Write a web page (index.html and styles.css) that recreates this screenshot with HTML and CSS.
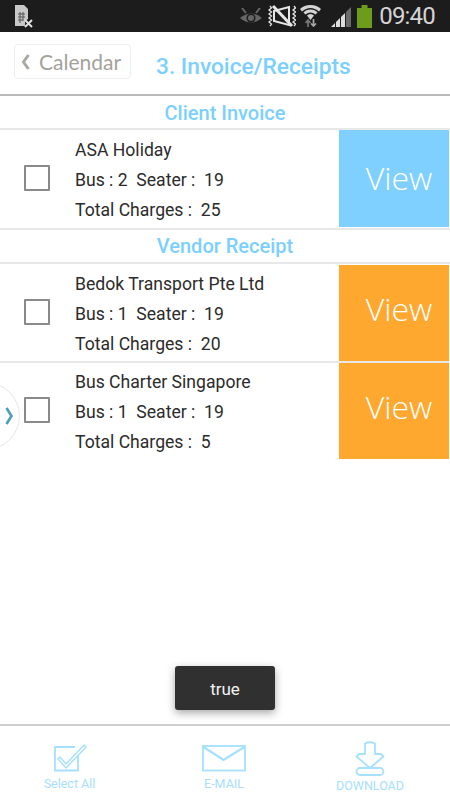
FILE: index.html
```html
<!DOCTYPE html>
<html>
<head>
<meta charset="utf-8">
<title>Invoice/Receipts</title>
<link rel="stylesheet" href="styles.css">
</head>
<body>
<div class="page">
  <div class="status">
    <svg width="19" height="23" viewBox="0 0 19 23"><path d="M0 0H9L13 4V14L10 16V21H0Z" fill="#c8c8c8"/><path d="M3 9H10M3 12H10M3 15H8M5 7V18M8 7V16" stroke="#555" stroke-width="1" fill="none"/><path d="M10 15L17 22M17 15L10 22" stroke="#e0e0e0" stroke-width="2"/></svg>
    <div class="status-right">
      <svg class="i-eye" width="22" height="17" viewBox="0 0 22 17"><path d="M0 10Q11 1 22 10Q11 19 0 10Z" fill="#666"/><circle cx="11" cy="10" r="4.500" fill="#1c1c1c"/><circle cx="11" cy="10" r="3" fill="#666"/><path d="M2 0L6 5M20 0L16 5" stroke="#666" stroke-width="2"/></svg>
      <svg class="i-mute" width="28" height="22" viewBox="0 0 28 22"><path d="M2 1L3.500 3L1 5L3.500 7L1 9L3.500 11L1 13L3.500 15L1 17L3.500 19L2 21M26 1L27.500 3L25 5L27.500 7L25 9L27.500 11L25 13L27.500 15L25 17L27.500 19L26 21" stroke="#e6e6e6" stroke-width="1.300" fill="none"/><path d="M6 6L21 2V20L6 16Z" fill="#1c1c1c" stroke="#e6e6e6" stroke-width="2"/><path d="M5 1L24 21" stroke="#e6e6e6" stroke-width="3"/></svg>
      <svg class="i-wifi" width="21" height="22" viewBox="0 0 21 22"><path d="M10.500 0Q4 0 0 4L2 6.500Q6 3 10.500 3Q15 3 19 6.500L21 4Q17 0 10.500 0ZM10.500 4.500Q6 4.500 3.500 7.500L5.500 9.500Q8 7.500 10.500 7.500Q13 7.500 15.500 9.500L17.500 7.500Q15 4.500 10.500 4.500ZM10.500 9Q8.500 9 7 10.500L10.500 15L14 10.500Q12.500 9 10.500 9Z" fill="#d4d4d4"/><path d="M8 15V22M5.500 18L8 15L10.500 18" stroke="#777" stroke-width="1.700" fill="none"/><path d="M13.500 14V21M11 18.500L13.500 21L16 18.500" stroke="#a8a8a8" stroke-width="1.700" fill="none"/></svg>
      <svg class="i-signal" width="20" height="20" viewBox="0 0 20 20"><path d="M0 20L4 16V20ZM5 15L9 11V20H5ZM10 10L14 6V20H10Z" fill="#dcdcdc"/><path d="M15 5L20 0V20H15Z" fill="#6a6a6a"/></svg>
      <svg class="i-batt" width="15" height="23" viewBox="0 0 15 23"><path d="M4.500 0H10.500V3H15V23H0V3H4.500Z" fill="#6c9c1a"/></svg>
      <span class="clock">09:40</span>
    </div>
  </div>

  <header class="topbar">
    <div class="back"><svg class="chev" width="9" height="16" viewBox="0 0 9 16"><path d="M7.500 1L2.500 8L7.500 15" fill="none" stroke="#a9a9a3" stroke-width="3"/></svg>Calendar</div>
    <h1 class="title">3. Invoice/Receipts</h1>
  </header>

  <main class="content">
    <h2 class="section first">Client Invoice</h2>
    <section class="row r1">
      <div class="check-cell"><span class="check"></span></div>
      <div class="info">
        <div>ASA Holiday</div>
        <div>Bus : 2&nbsp; Seater :&nbsp; 19</div>
        <div>Total Charges :&nbsp; 25</div>
      </div>
      <div class="view blue">View</div>
    </section>
    <h2 class="section">Vendor Receipt</h2>
    <section class="row r2">
      <div class="check-cell"><span class="check"></span></div>
      <div class="info">
        <div>Bedok Transport Pte Ltd</div>
        <div>Bus : 1&nbsp; Seater :&nbsp; 19</div>
        <div>Total Charges :&nbsp; 20</div>
      </div>
      <div class="view orange">View</div>
    </section>
    <section class="row r3">
      <div class="check-cell"><span class="check"></span></div>
      <div class="info">
        <div>Bus Charter Singapore</div>
        <div>Bus : 1&nbsp; Seater :&nbsp; 19</div>
        <div>Total Charges :&nbsp; 5</div>
      </div>
      <div class="view orange">View</div>
    </section>
  </main>

  <nav class="bottom">
    <div class="tool tool-a">
      <svg width="34" height="30" viewBox="0 0 34 30"><path d="M25 11V27.500H2V4H22" fill="none" stroke="#a6e0ff" stroke-width="1.800"/><path d="M7 14L13 21L31 2L33 4L13 25L5 16Z" fill="#fff" stroke="#a6e0ff" stroke-width="1.400" stroke-linejoin="round"/></svg>
      <span>Select All</span>
    </div>
    <div class="tool tool-b">
      <svg width="44" height="27" viewBox="0 0 44 27"><rect x="1" y="1" width="42" height="24.500" fill="none" stroke="#a6e0ff" stroke-width="1.800"/><path d="M1.500 2L21.500 15L42.500 2" fill="none" stroke="#a6e0ff" stroke-width="2.200"/></svg>
      <span>E-MAIL</span>
    </div>
    <div class="tool tool-c">
      <svg width="30" height="35" viewBox="0 0 30 35"><path d="M10 1.500Q15 -1 20 1.500V12H26L28.500 14.500L15 26L1.500 14.500L4 12H10Z" transform="translate(0 1)" fill="none" stroke="#a6e0ff" stroke-width="1.800" stroke-linejoin="round"/><rect x="1.500" y="27" width="27" height="7" rx="3.500" fill="none" stroke="#a6e0ff" stroke-width="1.800"/></svg>
      <span>DOWNLOAD</span>
    </div>
  </nav>

  <div class="side-tab"><svg width="8" height="18" viewBox="0 0 8 18"><path d="M1.500 1L6.500 9L1.500 17" fill="none" stroke="#4a9dbd" stroke-width="2.600"/></svg></div>
  <div class="toast">true</div>
</div>
</body>
</html>
```

FILE: styles.css
```css
* { box-sizing: border-box; }
html, body { margin: 0; padding: 0; }
body { width: 450px; height: 800px; overflow: hidden; background: #fff; font-family: Roboto, "Liberation Sans", sans-serif; }
.page { position: relative; width: 450px; height: 800px; display: flex; flex-direction: column; }

.status { height: 32px; background: #1c1c1c; display: flex; align-items: center; justify-content: space-between; padding: 0 15px 0 15px; flex: none; }
.status-right { display: flex; align-items: center; }
.i-eye { margin-top: 1px; }
.i-mute { margin-left: 6px; }
.i-wifi { margin-left: 4px; }
.i-signal { margin-left: 10px; margin-top: 2px; }
.i-batt { margin-left: 6px; }
.clock { color: #d4d4d4; font-size: 24px; letter-spacing: -.8px; line-height: 32px; margin-left: 7px; }

.topbar { height: 64px; flex: none; border-bottom: 2px solid #b9b9b9; display: flex; align-items: center; padding: 0 0 0 14px; }
.back { width: 117px; height: 35px; margin-top: -3px; border: 1px solid #eeeeee; border-radius: 4px; color: #a3a29b; font-family: Lato, sans-serif; font-size: 21px; line-height: 33px; padding-left: 6px; white-space: nowrap; display: flex; align-items: center; }
.chev { margin-right: 9px; flex: none; }
.title { margin: 0 0 0 25px; color: #7bd0ff; font-size: 22.700px; font-weight: 500; line-height: 26px; position: relative; top: 4px; white-space: nowrap; }

.content { flex: 1; }
.section { margin: 0; height: 36px; border-bottom: 2px solid #e8e8e8; border-top: 2px solid #e8e8e8; text-align: center; color: #7bd0ff; font-size: 20px; font-weight: 500; line-height: 32px; }
.section.first { border-top: 0; height: 34px; line-height: 34px; }
.row { display: flex; }
.r1 { height: 98px; padding: 0 1px 1px 0; }
.r2 { height: 99px; padding: 1px 1px 0 0; border-bottom: 2px solid #e8e8e8; }
.r3 { height: 96px; padding: 0 1px 0 0; }
.check-cell { width: 75px; flex: none; display: flex; align-items: center; justify-content: center; }
.check { width: 26px; height: 26px; border: 2px solid #8a8a8a; background: #fff; border-radius: 1px; margin: 0 1px 2px 0; }
.info { flex: 1; color: #2b2b2b; font-size: 17.600px; line-height: 30px; white-space: nowrap; }
.r1 .info { padding-top: 5px; }
.r2 .info { padding-top: 4px; }
.r3 .info { padding-top: 4px; }
.view { width: 110px; flex: none; display: flex; align-items: center; justify-content: center; padding-left: 10px; color: #fff; font-family: "Open Sans", sans-serif; font-size: 32px; font-weight: 300; }
.r1 .view { padding-bottom: 3px; }
.r2 .view, .r3 .view { padding-bottom: 9px; }
.blue { background: #80d0ff; }
.orange { background: #ffa82f; }

.bottom { height: 76px; flex: none; border-top: 2px solid #cfcfcf; position: relative; }
.tool { position: absolute; top: 0; display: flex; flex-direction: column; align-items: center; color: #a6e0ff; font-size: 12.500px; font-weight: 400; white-space: nowrap; }
.tool span { line-height: 16px; }
.tool-a { left: 29px; width: 81px; padding-top: 17px; }
.tool-a span { margin-top: 3px; }
.tool-b { left: 185px; width: 78px; padding-top: 19px; }
.tool-b span { margin-top: 4px; }
.tool-c { left: 321px; width: 98px; padding-top: 15px; }
.tool-c span { margin-top: 2px; }

.side-tab { position: absolute; left: -48px; top: 382px; width: 68px; height: 68px; border-radius: 50%; background: #fff; border: 1px solid #e6e6e6; display: flex; align-items: center; justify-content: flex-end; padding-right: 6px; }
.toast { position: absolute; left: 175px; top: 666px; width: 100px; height: 44px; background: #303030; border-radius: 3px; color: #f2f2f2; font-size: 17px; display: flex; align-items: center; justify-content: center; padding-top: 2px; box-shadow: 0 3px 8px rgba(0,0,0,.35); }
```
